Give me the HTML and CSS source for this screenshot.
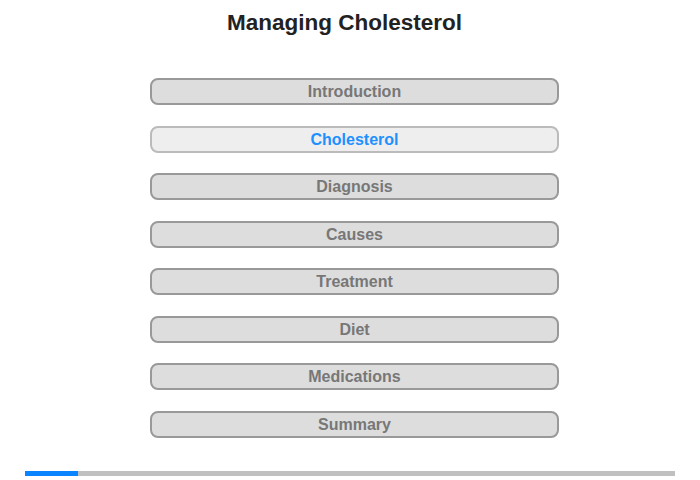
FILE: index.html
```html
<!DOCTYPE html>
<html>
<head>
<meta charset="utf-8">
<link rel="stylesheet" href="styles.css">
</head>
<body>
<div class="page">
  <h1 class="title">Managing Cholesterol</h1>
  <nav class="menu">
    <div class="item">Introduction</div>
    <div class="item active">Cholesterol</div>
    <div class="item">Diagnosis</div>
    <div class="item">Causes</div>
    <div class="item">Treatment</div>
    <div class="item">Diet</div>
    <div class="item">Medications</div>
    <div class="item">Summary</div>
  </nav>
  <div class="progress"><div class="progress-fill" style="width:8.2%"></div></div>
</div>
</body>
</html>
```
FILE: styles.css
```css
html, body {
  margin: 0;
  padding: 0;
  background: #fff;
}
.page {
  width: 700px;
  height: 480px;
  font-family: "Liberation Sans", Arial, sans-serif;
  display: flex;
  flex-direction: column;
  align-items: center;
}
.title {
  margin: 10px 11px 0 0;
  font-size: 22.5px;
  line-height: 25px;
  font-weight: bold;
  color: #222;
  text-align: center;
}
.menu {
  margin-top: 43px;
  margin-left: 9px;
  display: flex;
  flex-direction: column;
  gap: 20.5px;
}
.item {
  box-sizing: border-box;
  width: 409px;
  height: 27px;
  border: 2px solid #999;
  border-radius: 8px;
  background: #ddd;
  color: #777;
  font-size: 16px;
  font-weight: bold;
  line-height: 23px;
  text-align: center;
}
.item.active {
  background: #eee;
  border-color: #bbb;
  color: #1e90ff;
}
.progress {
  margin-top: auto;
  margin-bottom: 4px;
  width: 650px;
  height: 5px;
  background: #c0c0c0;
}
.progress-fill {
  height: 100%;
  background: #0a84ff;
}
```
